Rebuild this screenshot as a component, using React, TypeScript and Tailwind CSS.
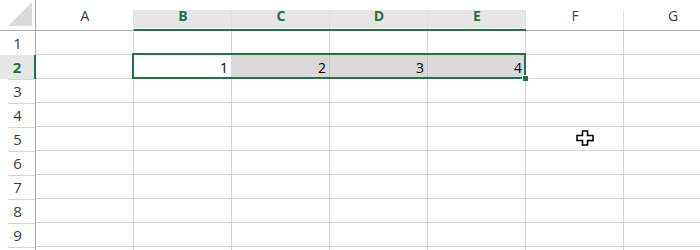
const cols = ["A", "B", "C", "D", "E", "F", "G"];
const rows = [1, 2, 3, 4, 5, 6, 7, 8, 9, 10];
const values: Record<string, number> = { B: 1, C: 2, D: 3, E: 4 };
const selectedCols = ["B", "C", "D", "E"];

function CornerCell() {
  return (
    <div className="w-[36px] h-[31px] border-r border-b border-[#ababab] flex items-end justify-end pr-[2px] pb-[3px]">
      <svg width="26" height="26" viewBox="0 0 26 26">
        <polygon points="25,1 25,25 1,25" fill="#d9d9d9" />
      </svg>
    </div>
  );
}

function ColHeader({ col }: { col: string }) {
  const sel = selectedCols.includes(col);
  return (
    <div
      className={
        "relative w-[98px] h-[31px] flex items-center justify-center text-[14px] " +
        (sel
          ? "border-b-2 border-[#217346] text-[#217346] font-bold bg-[linear-gradient(to_bottom,#ffffff_10px,#e6e6e6_10px,#e6e6e6_28px,#ffffff_28px)]"
          : "border-b border-[#ababab] text-[#3c3c3c]")
      }
    >
      <span className="pt-[1px]">{col}</span>
      <span className="absolute right-0 top-[10px] bottom-0 w-px bg-[#e1e1e1]" />
    </div>
  );
}

function RowHeader({ row }: { row: number }) {
  const sel = row === 2;
  // row 10 is only a sliver at the bottom edge, its number is not shown
  const label = row < 10 ? row : "";
  return (
    <div
      className={
        "w-[36px] h-[24px] flex flex-col " +
        (sel ? "border-r-2 border-[#217346] bg-[#e6e6e6]" : "border-r border-[#ababab]")
      }
    >
      <div
        className={
          "flex-1 flex items-center justify-center text-[15px] pt-[1px] " +
          (sel ? "text-[#217346] font-bold" : "text-[#3c3c3c]")
        }
      >
        {label}
      </div>
      <div className="ml-[8px] h-px bg-[#d4d4d4]" />
    </div>
  );
}

function Cell({ row, col }: { row: number; col: string }) {
  const inRange = row === 2 && selectedCols.includes(col);
  const gray = inRange && col !== "B";
  return (
    <div
      className={
        "w-[98px] h-[24px] border-r border-b border-[#d4d4d4] flex items-center justify-end pr-[3px] pt-[2px] text-[14px] text-black " +
        (gray ? "bg-[#d9d9d9] border-r-[#c3c3c3]" : "bg-white")
      }
    >
      {inRange ? values[col] : ""}
    </div>
  );
}

export default function App() {
  return (
    <div className="relative w-[700px] h-[250px] overflow-hidden bg-white font-['Open_Sans','Liberation_Sans',sans-serif]">
      <div className="grid grid-cols-[36px_repeat(7,98px)] w-max">
        <CornerCell />
        {cols.map((c) => (
          <ColHeader key={c} col={c} />
        ))}
        {rows.map((r) => [
          <RowHeader key={"h" + r} row={r} />,
          ...cols.map((c) => <Cell key={c + r} row={r} col={c} />),
        ])}
      </div>

      {/* selection border + fill handle */}
      <div className="absolute left-[132px] top-[53px] w-[394px] h-[26px] border-2 border-[#217346]" />
      <div className="absolute left-[522px] top-[75px] w-[7px] h-[7px] bg-[#217346] border border-white" />

      {/* mouse cursor */}
      <svg
        className="absolute left-[576px] top-[130px]"
        width="19"
        height="17"
        viewBox="0 0 19 17"
      >
        <polygon
          points="7.5,2 12.5,2 12.5,6.5 18,6.5 18,11.5 12.5,11.5 12.5,16 7.5,16 7.5,11.5 2,11.5 2,6.5 7.5,6.5"
          fill="#cfcfcf"
        />
        <polygon
          points="6.5,1 11.5,1 11.5,5.5 17,5.5 17,10.5 11.5,10.5 11.5,15 6.5,15 6.5,10.5 1,10.5 1,5.5 6.5,5.5"
          fill="#ffffff"
          stroke="#000000"
          strokeWidth="1.5"
        />
      </svg>
    </div>
  );
}
